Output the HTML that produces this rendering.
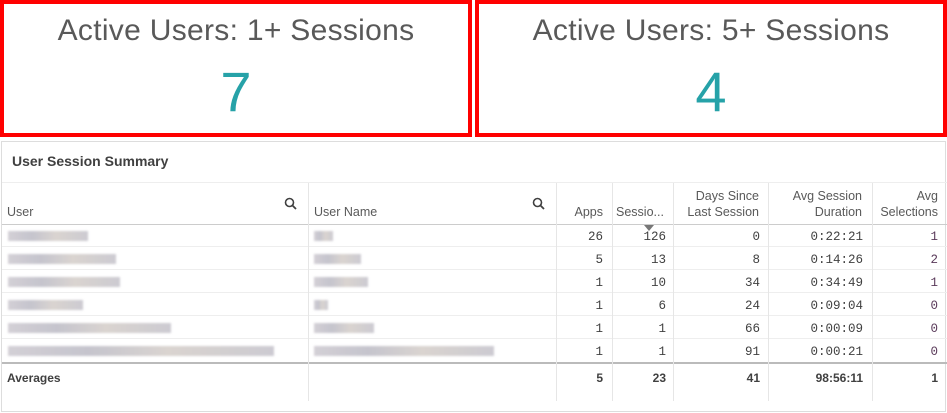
<!DOCTYPE html>
<html><head><style>
*{margin:0;padding:0;box-sizing:border-box}
body{width:947px;height:413px;background:#fff;position:relative;overflow:hidden;font-family:"Liberation Sans",sans-serif}
.kpi{position:absolute;top:0;height:137px;border:4px solid #f00;background:#fff}
.kpi .t{position:absolute;left:0;right:0;top:10px;text-align:center;font-size:30px;color:#595959;letter-spacing:0.3px}
.kpi .n{position:absolute;left:0;right:0;top:55px;text-align:center;font-size:56px;color:#26a2a8}
.panel{position:absolute;left:1px;top:141px;width:945px;height:271px;border:1px solid #ddd}
.title{position:absolute;left:10px;top:11px;font-size:14px;font-weight:bold;color:#404040}
.a{position:absolute}
.hd{font-size:12.5px;color:#595959;text-align:right;line-height:16px}
.vl{position:absolute;width:1px;background:#e6e6e6}
.hl{position:absolute;height:1px;background:#eee;left:0;width:945px}
.num{position:absolute;font-family:"Liberation Mono",monospace;font-size:12.5px;color:#404040;text-align:right;line-height:11.5px}
.bl{position:absolute;height:10px;background:linear-gradient(90deg,#cfcbd2,#bfbec8 30%,#d6d0cc 60%,#c7c5cd);filter:blur(1px);opacity:.9}
.av{position:absolute;font-size:12px;font-weight:bold;color:#404040;text-align:right}
</style></head><body>
<div class="kpi" style="left:0;width:472px"><div class="t">Active Users: 1+ Sessions</div><div class="n">7</div></div>
<div class="kpi" style="left:475px;width:472px"><div class="t">Active Users: 5+ Sessions</div><div class="n">4</div></div>
<div class="panel">
<div class="title">User Session Summary</div>
<div class="hl" style="top:40px"></div>
<div class="hl" style="top:82px;background:#ccc"></div>
<div class="hl" style="top:104px"></div>
<div class="hl" style="top:127px"></div>
<div class="hl" style="top:150px"></div>
<div class="hl" style="top:173px"></div>
<div class="hl" style="top:196px"></div>
<div class="hl" style="top:220px;height:2px;background:#bbb"></div>
<div class="vl" style="left:306px;top:41px;height:218px"></div>
<div class="vl" style="left:554px;top:41px;height:218px"></div>
<div class="vl" style="left:610px;top:41px;height:218px"></div>
<div class="vl" style="left:671px;top:41px;height:218px"></div>
<div class="vl" style="left:766px;top:41px;height:218px"></div>
<div class="vl" style="left:870px;top:41px;height:218px"></div>
<div class="a hd" style="left:5px;top:62px;text-align:left">User</div>
<div class="a hd" style="left:312px;top:62px;text-align:left">User Name</div>
<svg class="a" style="left:282px;top:55px" width="14" height="14" viewBox="0 0 14 14"><circle cx="5.5" cy="5.5" r="4" fill="none" stroke="#404040" stroke-width="1.6"/><path d="M8.5 8.5L12 12" stroke="#404040" stroke-width="1.8"/></svg>
<svg class="a" style="left:530px;top:55px" width="14" height="14" viewBox="0 0 14 14"><circle cx="5.5" cy="5.5" r="4" fill="none" stroke="#404040" stroke-width="1.6"/><path d="M8.5 8.5L12 12" stroke="#404040" stroke-width="1.8"/></svg>
<div class="a hd" style="left:556px;width:45px;top:62px">Apps</div>
<div class="a hd" style="left:614px;width:60px;top:62px;text-align:left">Sessio...</div>
<div class="a hd" style="left:672px;width:85px;top:46px">Days Since<br>Last Session</div>
<div class="a hd" style="left:767px;width:93px;top:46px">Avg Session<br>Duration</div>
<div class="a hd" style="left:871px;width:65px;top:46px">Avg<br>Selections</div>
<svg class="a" style="left:642px;top:83px" width="10" height="6"><path d="M0 0H10L5 6Z" fill="#777"/></svg>

<div class="bl" style="left:6px;top:89px;width:80px"></div><div class="bl" style="left:312px;top:89px;width:19px"></div>
<div class="bl" style="left:6px;top:112px;width:108px"></div><div class="bl" style="left:312px;top:112px;width:47px"></div>
<div class="bl" style="left:6px;top:135px;width:112px"></div><div class="bl" style="left:312px;top:135px;width:54px"></div>
<div class="bl" style="left:6px;top:158px;width:75px"></div><div class="bl" style="left:312px;top:158px;width:14px"></div>
<div class="bl" style="left:6px;top:181px;width:163px"></div><div class="bl" style="left:312px;top:181px;width:60px"></div>
<div class="bl" style="left:6px;top:204px;width:266px"></div><div class="bl" style="left:312px;top:204px;width:180px"></div>

<div class="num" style="left:556px;width:45px;top:90px">26<br><br>5<br><br>1<br><br>1<br><br>1<br><br>1</div>
<div class="num" style="left:612px;width:52px;top:90px">126<br><br>13<br><br>10<br><br>6<br><br>1<br><br>1</div>
<div class="num" style="left:672px;width:86px;top:90px">0<br><br>8<br><br>34<br><br>24<br><br>66<br><br>91</div>
<div class="num" style="left:767px;width:94px;top:90px">0:22:21<br><br>0:14:26<br><br>0:34:49<br><br>0:09:04<br><br>0:00:09<br><br>0:00:21</div>
<div class="num" style="left:871px;width:65px;top:90px;color:#5a3a5a">1<br><br>2<br><br>1<br><br>0<br><br>0<br><br>0</div>
<div class="av" style="left:5px;top:229px;text-align:left">Averages</div>
<div class="av" style="left:556px;width:45px;top:229px">5</div>
<div class="av" style="left:612px;width:52px;top:229px">23</div>
<div class="av" style="left:672px;width:86px;top:229px">41</div>
<div class="av" style="left:767px;width:94px;top:229px">98:56:11</div>
<div class="av" style="left:871px;width:65px;top:229px">1</div>
</div>
</body></html>
